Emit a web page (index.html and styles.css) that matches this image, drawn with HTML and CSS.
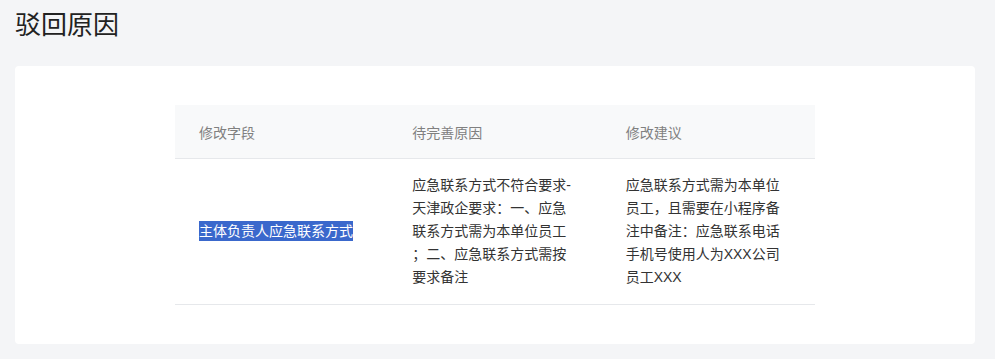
FILE: index.html
```html
<!DOCTYPE html>
<html lang="zh-CN">
<head>
  <meta charset="UTF-8">
  <title>驳回原因</title>
  <link rel="stylesheet" href="styles.css">
</head>
<body>
  <h1 class="page-title">驳回原因</h1>

  <div class="card">
    <table class="reject-table">
      <thead>
        <tr>
          <th>修改字段</th>
          <th>待完善原因</th>
          <th>修改建议</th>
        </tr>
      </thead>
      <tbody>
        <tr>
          <td><span class="picked">主体负责人应急联系方式</span></td>
          <td>应急联系方式不符合要求-天津政企要求：一、应急联系方式需为本单位员工；二、应急联系方式需按要求备注</td>
          <td>应急联系方式需为本单位员工，且需要在小程序备注中备注：应急联系电话手机号使用人为XXX公司员工XXX</td>
        </tr>
      </tbody>
    </table>
  </div>
</body>
</html>
```

FILE: styles.css
```css
body {
  margin: 0;
  padding: 8px 20px 15px 15px;
  background-color: #f4f5f7;
  font-family: "Liberation Sans", "Noto Sans CJK SC", sans-serif;
  color: #333;
}

.page-title {
  margin: 0;
  font-size: 26px;
  line-height: 34px;
  font-weight: normal;
  color: #222;
}

.card {
  margin-top: 24px;
  padding: 39px 0 39px;
  background-color: #fff;
  border-radius: 4px;
}

.reject-table {
  width: 640px;
  margin: 0 auto;
  border-collapse: collapse;
  table-layout: fixed;
  font-size: 14px;
}

.reject-table th {
  height: 53px;
  padding: 0 24px;
  text-align: left;
  font-weight: normal;
  color: #808080;
  background-color: #f8f9fa;
  border-bottom: 1px solid #e6e8eb;
}

.reject-table td {
  padding: 15px 24px;
  line-height: 23px;
  vertical-align: middle;
  border-bottom: 1px solid #e6e8eb;
  word-break: break-all;
  line-break: anywhere;
}

.picked {
  background-color: #3a68cc;
  color: #fff;
  padding: 2px 0;
}
```
